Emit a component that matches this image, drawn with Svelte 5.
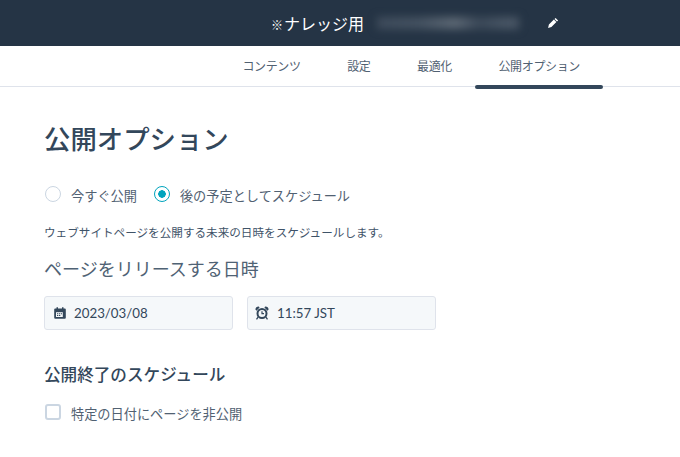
<script lang="ts">
  const tabs = [
    { label: 'コンテンツ', active: false },
    { label: '設定', active: false },
    { label: '最適化', active: false },
    { label: '公開オプション', active: true }
  ];
</script>

<div class="page">
  <header class="topbar">
    <span class="page-name"><small>※</small>ナレッジ用</span>
    <span class="blurred"></span>
    <svg class="pencil" viewBox="0 0 12 12" width="12" height="12">
      <path fill="#fff" d="M8.600 0.900l2.500 2.500-1.100 1.100-2.500-2.500zM6.900 2.600l2.500 2.500-5 5-3.300.8.800-3.300z" />
    </svg>
  </header>

  <nav class="tabs">
    {#each tabs as tab}
      <span class="tab" class:active={tab.active}>{tab.label}</span>
    {/each}
  </nav>

  <main class="content">
    <h1>公開オプション</h1>

    <div class="radios">
      <label class="radio"><span class="circle"></span>今すぐ公開</label>
      <label class="radio"><span class="circle checked"></span>後の予定としてスケジュール</label>
    </div>

    <p class="help">ウェブサイトページを公開する未来の日時をスケジュールします。</p>

    <h2>ページをリリースする日時</h2>

    <div class="fields">
      <div class="field">
        <svg viewBox="0 0 12 12" width="12" height="12">
          <path fill="#33475b" d="M2.500 0.300h1.500v1.200h4v-1.200h1.500v1.200H10.800a1 1 0 0 1 1 1v8.200a1 1 0 0 1-1 1H1.200a1 1 0 0 1-1-1V2.500a1 1 0 0 1 1-1h1.300z" />
          <path fill="#f5f8fa" d="M2 5.200h6.800v4.800H2z" />
          <path fill="#33475b" d="M3 6.200h1.300v1H3zM5 6.200h1.300v1H5zM7 6.200h1v1H7zM3 8h1.300v1H3zM5 8h1.300v1H5z" />
        </svg>
        <span>2023/03/08</span>
      </div>
      <div class="field">
        <svg class="alarm" viewBox="0 0 14 14" width="14" height="14">
          <circle cx="7" cy="7.500" r="4.500" fill="#f5f8fa" stroke="#33475b" stroke-width="2" />
          <path fill="none" stroke="#33475b" stroke-width="1.200" d="M7 5.200v2.500h2" />
          <path fill="#33475b" d="M0.400 3.600Q0.600 0.800 3.800 0.600l0.800 1L1.500 4.800zM13.600 3.600Q13.400 0.800 10.200 0.600l-0.800 1 3.100 3.200zM2.500 10.800l1 1-1.500 1.900-1-0.800zM11.500 10.800l-1 1 1.500 1.900 1-0.800z" />
        </svg>
        <span>11:57 JST</span>
      </div>
    </div>

    <h3>公開終了のスケジュール</h3>

    <label class="check"><span class="box"></span>特定の日付にページを非公開</label>
  </main>
</div>

<style>
  :global(body) {
    background: #fff;
  }

  .page {
    width: 680px;
    height: 457px;
    overflow: hidden;
    font-family: "Noto Sans CJK JP", "Noto Sans", sans-serif;
    color: #33475b;
  }

  .topbar {
    height: 46px;
    background: #253445;
    display: flex;
    align-items: center;
    padding-left: 271px;
    box-sizing: border-box;
    color: #fff;
  }

  .page-name {
    font-size: 16px;
  }

  .page-name small {
    font-size: 12px;
    font-weight: 700;
    margin-right: 1px;
  }

  .blurred {
    width: 142px;
    height: 12px;
    margin-left: 13px;
    background: linear-gradient(90deg, #3f4c5c, #465362 30%, #5f6a76 55%, #3c4959 72%, #4a5766 90%);
    filter: blur(4px);
  }

  .pencil {
    margin-left: 28px;
  }

  .tabs {
    height: 41px;
    box-sizing: border-box;
    border-bottom: 1px solid #dfe3eb;
    display: flex;
    justify-content: flex-end;
    padding-right: 100px;
    gap: 46.500px;
  }

  .tab {
    position: relative;
    font-size: 12px;
    line-height: 40px;
    letter-spacing: -0.350px;
    color: #516172;
  }

  .tab.active::after {
    content: '';
    position: absolute;
    left: -23px;
    right: -23px;
    bottom: -3px;
    height: 4px;
    border-radius: 2px;
    background: #33475b;
  }

  .content {
    padding: 32px 44px 0;
  }

  h1 {
    margin: 0;
    font-size: 26.400px;
    line-height: 38px;
    font-weight: 500;
  }

  .radios {
    display: flex;
    gap: 17px;
    margin-top: 29px;
    padding-left: 1px;
  }

  .radio,
  .check {
    display: flex;
    align-items: center;
    gap: 10px;
    font-size: 13.200px;
    line-height: 20px;
    color: #516172;
  }

  .circle {
    width: 16px;
    height: 16px;
    box-sizing: border-box;
    border: 1.500px solid #cbd6e2;
    border-radius: 50%;
    margin-top: -4px;
    background: #fff;
  }

  .circle.checked {
    border-color: #00a4bd;
    background: radial-gradient(circle, #00a4bd 0 3.500px, #fff 4px);
  }

  .help {
    margin: 17px 0 0;
    font-size: 11.600px;
    line-height: 18px;
    color: #3f5368;
  }

  h2 {
    margin: 14px 0 0;
    font-size: 18px;
    line-height: 26px;
    font-weight: 400;
    color: #4f6274;
  }

  .fields {
    display: flex;
    gap: 14px;
    margin-top: 15px;
  }

  .field {
    width: 189px;
    height: 34px;
    box-sizing: border-box;
    display: flex;
    align-items: center;
    gap: 8px;
    padding-left: 9px;
    background: #f5f8fa;
    border: 1px solid #dfe3eb;
    border-radius: 3px;
    font-family: Lato, "Noto Sans", sans-serif;
    font-size: 13.300px;
    color: #33475b;
  }

  .alarm {
    margin-left: -2px;
  }

  h3 {
    margin: 32px 0 0;
    font-size: 16.600px;
    line-height: 24px;
    font-weight: 500;
  }

  .check {
    margin-top: 18px;
    padding-left: 1px;
  }

  .box {
    width: 16px;
    height: 16px;
    box-sizing: border-box;
    border: 2px solid #cbd6e2;
    border-radius: 3px;
    margin-top: -4px;
    background: #fff;
  }
</style>
